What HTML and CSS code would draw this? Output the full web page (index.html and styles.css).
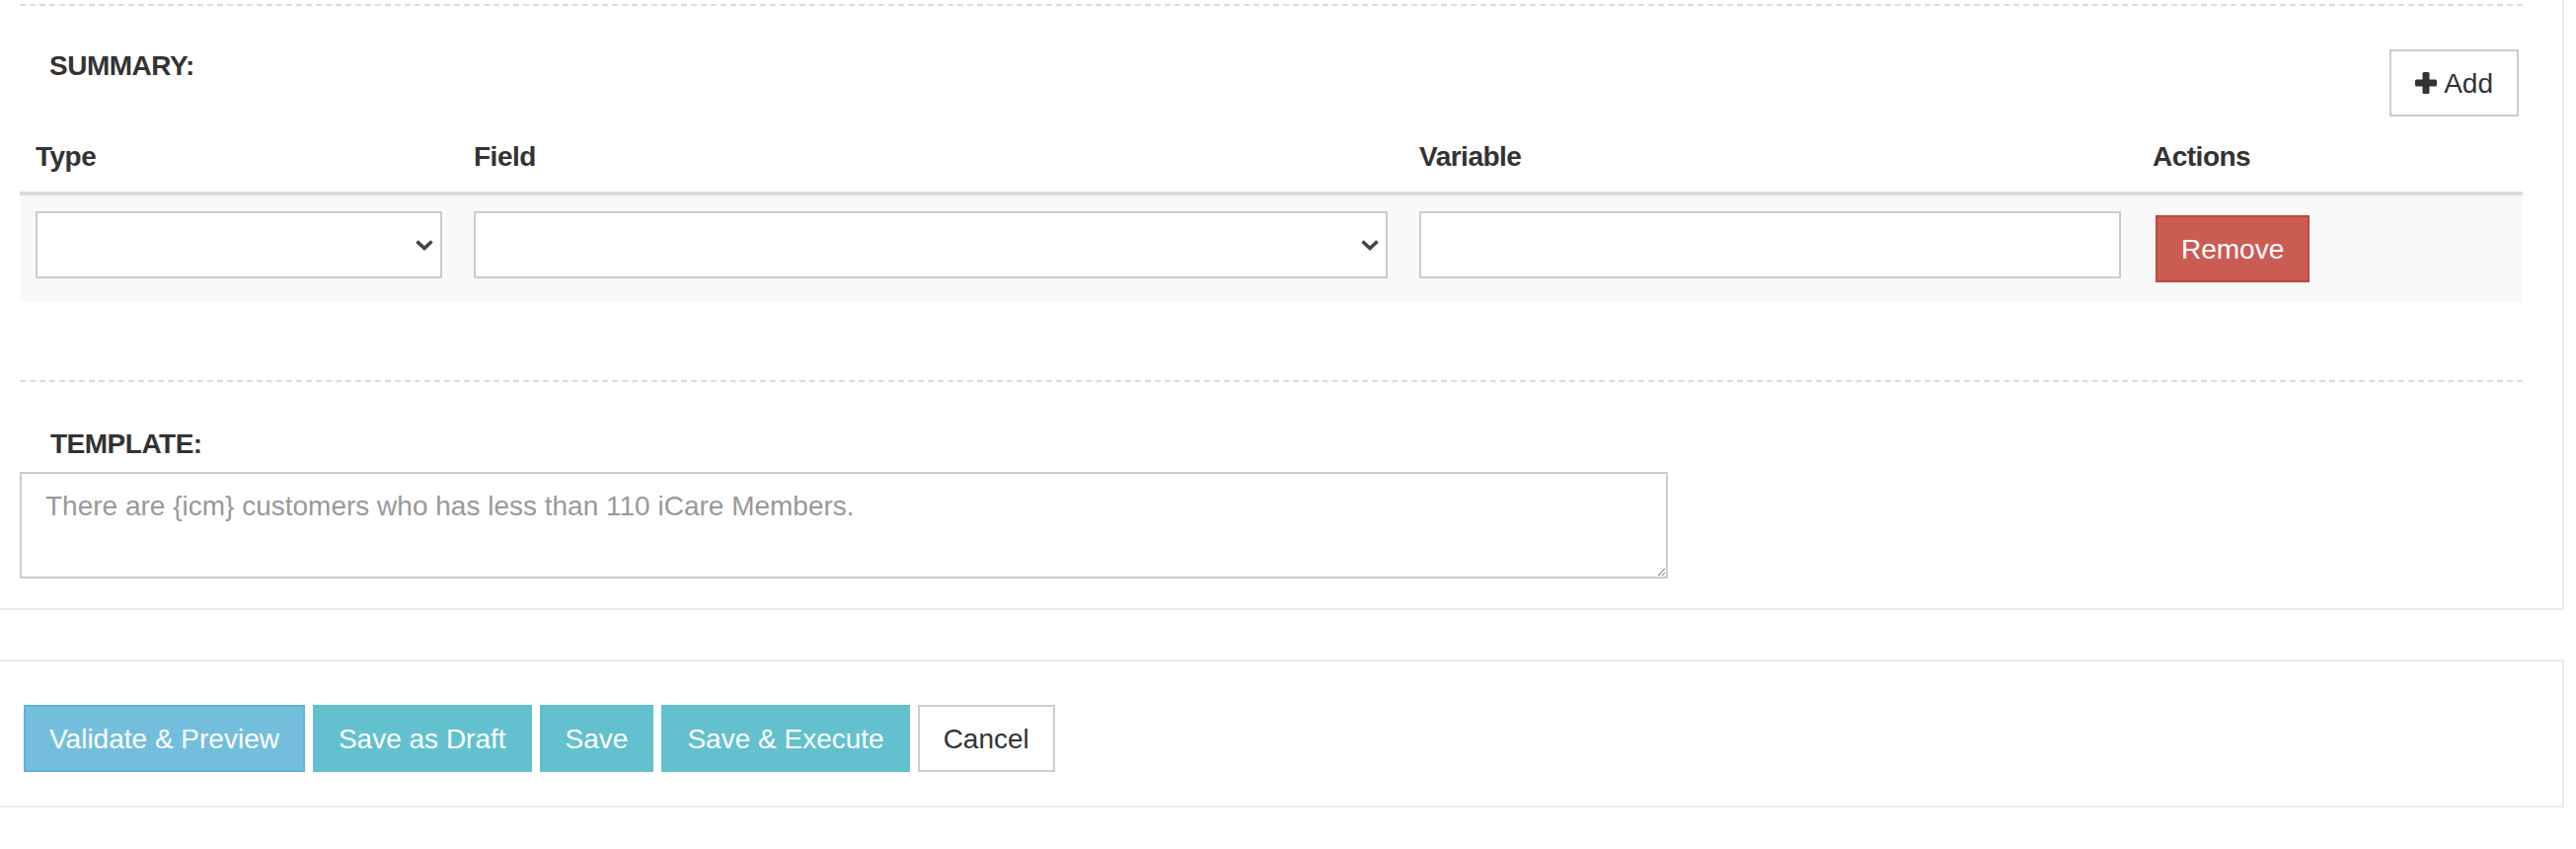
FILE: index.html
```html
<!DOCTYPE html>
<html lang="en">
<head>
<meta charset="utf-8">
<title>Summary template</title>
<link rel="stylesheet" href="styles.css">
</head>
<body>
  <div class="panel panel-main">
    <div class="hr-dashed hr-top"></div>

    <div class="summary-head">
      <label class="section-label summary-label">SUMMARY:</label>
      <button class="btn btn-light btn-add" type="button">
        <svg class="icon-plus" width="22" height="22" viewBox="0 0 22 22" aria-hidden="true">
          <rect x="7.5" y="0" width="7" height="22" rx="1.5"/>
          <rect x="0" y="7.5" width="22" height="7" rx="1.5"/>
        </svg>
        <span>Add</span>
      </button>
    </div>

    <table class="summary-table">
      <colgroup>
        <col class="col-type">
        <col class="col-field">
        <col class="col-variable">
        <col class="col-actions">
      </colgroup>
      <thead>
        <tr>
          <th>Type</th>
          <th>Field</th>
          <th>Variable</th>
          <th>Actions</th>
        </tr>
      </thead>
      <tbody>
        <tr>
          <td>
            <div class="select-wrap">
              <select class="form-control"><option></option></select>
              <svg class="chevron" width="18" height="11" viewBox="0 0 18 11" aria-hidden="true"><polyline points="1.5,1.5 9,8.5 16.5,1.5"/></svg>
            </div>
          </td>
          <td>
            <div class="select-wrap">
              <select class="form-control"><option></option></select>
              <svg class="chevron" width="18" height="11" viewBox="0 0 18 11" aria-hidden="true"><polyline points="1.5,1.5 9,8.5 16.5,1.5"/></svg>
            </div>
          </td>
          <td><input class="form-control" type="text"></td>
          <td><button class="btn btn-remove" type="button">Remove</button></td>
        </tr>
      </tbody>
    </table>

    <div class="hr-dashed hr-mid"></div>

    <label class="section-label template-label">TEMPLATE:</label>
    <textarea class="form-control template" placeholder="There are {icm} customers who has less than 110 iCare Members."></textarea>
  </div>

  <div class="panel panel-actions">
    <div class="actions">
      <button class="btn btn-validate" type="button">Validate &amp; Preview</button>
      <button class="btn btn-save" type="button">Save as Draft</button>
      <button class="btn btn-save" type="button">Save</button>
      <button class="btn btn-save" type="button">Save &amp; Execute</button>
      <button class="btn btn-light" type="button">Cancel</button>
    </div>
  </div>
</body>
</html>
```

FILE: styles.css
```css
* {
  box-sizing: border-box;
}

body {
  margin: 0;
  background: #fff;
  font-family: "Liberation Sans", Arial, Helvetica, sans-serif;
  font-size: 28px;
  line-height: 40px;
  color: #333;
}

.panel {
  width: 2598px;
  background: #fff;
  border-right: 2px solid #e7eaec;
  border-bottom: 2px solid #e7eaec;
}

.panel-main {
  display: flex;
  flex-direction: column;
  align-items: flex-start;
  padding: 0 40px 30px 20px;
}

.hr-dashed {
  align-self: stretch;
  height: 2px;
  background: repeating-linear-gradient(to right, #dcdcdc 0, #dcdcdc 6px, transparent 6px, transparent 10px);
}

.hr-top {
  margin: 4px 0 40px;
}

.hr-mid {
  margin: 79px 0 0;
}

.summary-head {
  align-self: stretch;
  display: flex;
  justify-content: space-between;
  align-items: flex-start;
  height: 72px;
  padding-left: 30px;
}

.section-label {
  display: block;
  font-weight: bold;
  line-height: 40px;
  letter-spacing: -0.5px;
  color: #333;
}

.summary-label {
  margin-top: 1px;
}

.template-label {
  margin: 43px 0 8px 31px;
}

/* Buttons */
.btn {
  display: inline-flex;
  align-items: center;
  margin: 0;
  padding: 13px 24px 11px;
  border: 2px solid transparent;
  border-radius: 0;
  font-family: inherit;
  font-size: 28px;
  line-height: 40px;
  white-space: nowrap;
  cursor: pointer;
}

.btn-light {
  background: #fff;
  border-color: #ccc;
  color: #333;
}

.btn-add {
  margin: 4px 4px 0 0;
  gap: 7px;
}

.icon-plus {
  display: block;
  margin-top: -2px;
  fill: #333;
}

.btn-remove {
  margin: 4px 0 0 3px;
  background: #cb5c54;
  border-color: #c4463e;
  color: #fff;
}

.btn-validate {
  background: #74bedd;
  border-color: #5fb3d8;
  color: #fff;
}

.btn-save {
  background: #63c1cf;
  border-color: #63c1cf;
  color: #fff;
}

/* Table */
.summary-table {
  margin-top: 5px;
  width: 2536px;
  table-layout: fixed;
  border-collapse: separate;
  border-spacing: 0;
}

.col-type { width: 444px; }
.col-field { width: 958px; }
.col-variable { width: 743px; }
.col-actions { width: 391px; }

.summary-table th {
  text-align: left;
  font-weight: bold;
  letter-spacing: -0.5px;
  line-height: 40px;
  padding: 16px 16px 15px;
  border-bottom: 4px solid #ddd;
  color: #333;
}

.summary-table td {
  vertical-align: top;
  padding: 16px 16px 20px;
  background: #f9f9f9;
}

.form-control {
  display: block;
  width: 100%;
  height: 68px;
  margin: 0;
  padding: 12px 24px;
  border: 2px solid #ccc;
  border-radius: 0;
  background: #fff;
  font-family: inherit;
  font-size: 28px;
  line-height: 40px;
  color: #333;
  -webkit-appearance: none;
  appearance: none;
  outline: none;
}

.select-wrap {
  position: relative;
}

.chevron {
  position: absolute;
  top: 29px;
  right: 9px;
  pointer-events: none;
}

.chevron polyline {
  fill: none;
  stroke: #444;
  stroke-width: 3.6;
  stroke-linecap: butt;
  stroke-linejoin: miter;
}

.template {
  width: 1670px;
  height: 108px;
  padding: 13px 24px 11px;
  resize: vertical;
}

.template::placeholder {
  color: #999;
  opacity: 1;
}

/* Actions panel */
.panel-actions {
  margin-top: 50px;
  border-top: 2px solid #e7eaec;
  padding: 44px 0 34px 24px;
}

.actions {
  display: flex;
  gap: 8px;
}
```
